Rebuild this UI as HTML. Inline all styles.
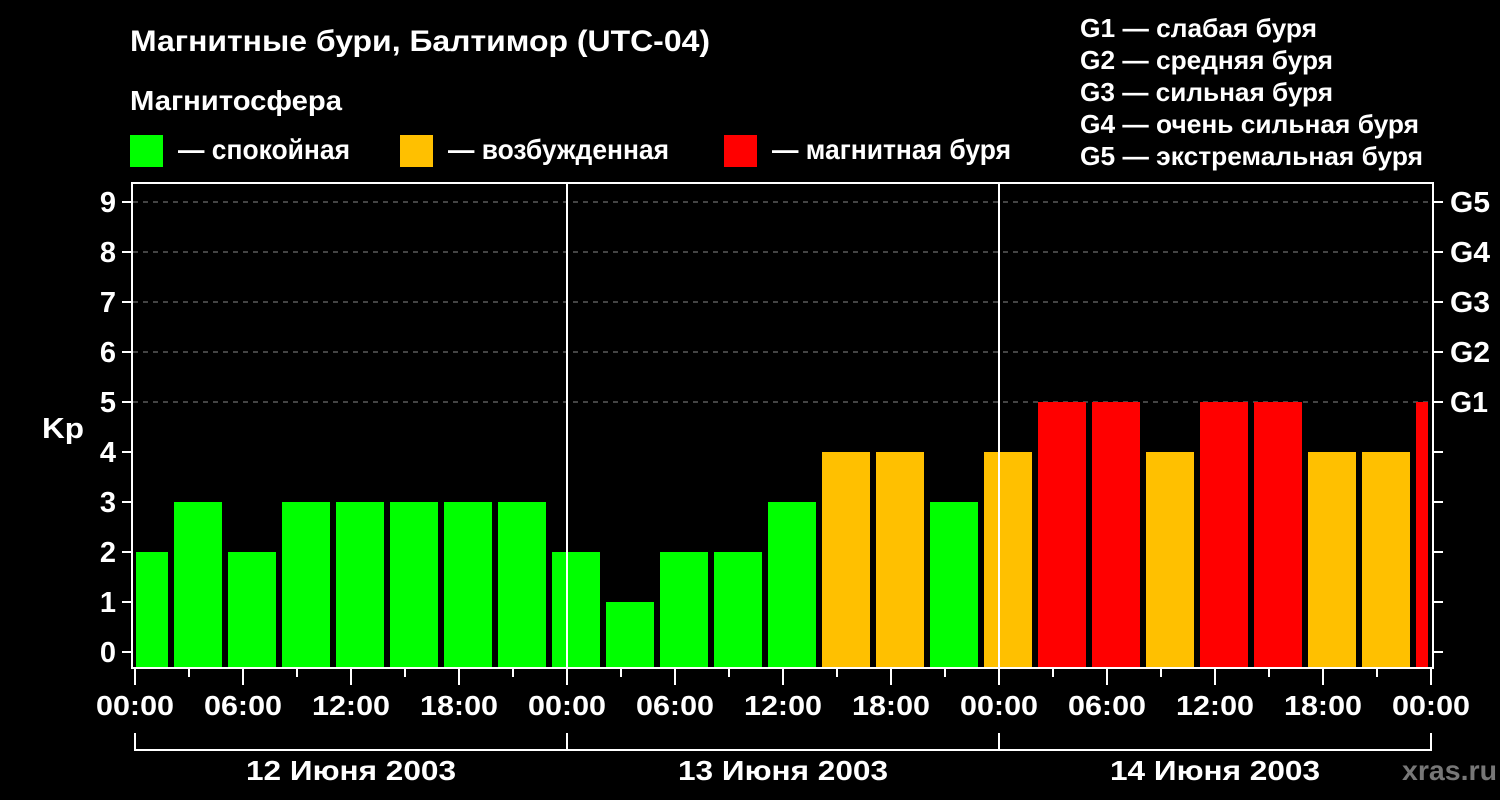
<!DOCTYPE html>
<html><head><meta charset="utf-8"><style>
html,body{margin:0;padding:0;background:#000;}
svg{display:block;}
text{font-family:"Liberation Sans",sans-serif;font-weight:bold;fill:#fff;}
</style></head><body>
<svg width="1500" height="800" viewBox="0 0 1500 800" xmlns="http://www.w3.org/2000/svg">
<rect width="1500" height="800" fill="#000"/>
<text x="130" y="51" font-size="30" textLength="580" lengthAdjust="spacingAndGlyphs">Магнитные бури, Балтимор (UTC-04)</text>
<text x="130" y="110" font-size="28" textLength="212" lengthAdjust="spacingAndGlyphs">Магнитосфера</text>
<rect x="130" y="135" width="33" height="32" fill="#00ff00"/>
<text x="178" y="159" font-size="28" textLength="172" lengthAdjust="spacingAndGlyphs">— спокойная</text>
<rect x="400" y="135" width="33" height="32" fill="#ffc000"/>
<text x="448" y="159" font-size="28" textLength="221" lengthAdjust="spacingAndGlyphs">— возбужденная</text>
<rect x="724" y="135" width="33" height="32" fill="#ff0000"/>
<text x="772" y="159" font-size="28" textLength="239" lengthAdjust="spacingAndGlyphs">— магнитная буря</text>
<g font-size="26">
<text x="1080" y="37" textLength="237" lengthAdjust="spacingAndGlyphs">G1 — слабая буря</text>
<text x="1080" y="69" textLength="253" lengthAdjust="spacingAndGlyphs">G2 — средняя буря</text>
<text x="1080" y="101" textLength="253" lengthAdjust="spacingAndGlyphs">G3 — сильная буря</text>
<text x="1080" y="133" textLength="339" lengthAdjust="spacingAndGlyphs">G4 — очень сильная буря</text>
<text x="1080" y="165" textLength="343" lengthAdjust="spacingAndGlyphs">G5 — экстремальная буря</text>
</g>
<g stroke="#888" stroke-width="1" stroke-dasharray="5,5">
<line x1="133" y1="202" x2="1432" y2="202"/>
<line x1="133" y1="252" x2="1432" y2="252"/>
<line x1="133" y1="302" x2="1432" y2="302"/>
<line x1="133" y1="352" x2="1432" y2="352"/>
<line x1="133" y1="402" x2="1432" y2="402"/>
</g>
<g>
<rect x="136" y="552" width="32" height="116" fill="#00ff00"/>
<rect x="174" y="502" width="48" height="166" fill="#00ff00"/>
<rect x="228" y="552" width="48" height="116" fill="#00ff00"/>
<rect x="282" y="502" width="48" height="166" fill="#00ff00"/>
<rect x="336" y="502" width="48" height="166" fill="#00ff00"/>
<rect x="390" y="502" width="48" height="166" fill="#00ff00"/>
<rect x="444" y="502" width="48" height="166" fill="#00ff00"/>
<rect x="498" y="502" width="48" height="166" fill="#00ff00"/>
<rect x="552" y="552" width="48" height="116" fill="#00ff00"/>
<rect x="606" y="602" width="48" height="66" fill="#00ff00"/>
<rect x="660" y="552" width="48" height="116" fill="#00ff00"/>
<rect x="714" y="552" width="48" height="116" fill="#00ff00"/>
<rect x="768" y="502" width="48" height="166" fill="#00ff00"/>
<rect x="822" y="452" width="48" height="216" fill="#ffc000"/>
<rect x="876" y="452" width="48" height="216" fill="#ffc000"/>
<rect x="930" y="502" width="48" height="166" fill="#00ff00"/>
<rect x="984" y="452" width="48" height="216" fill="#ffc000"/>
<rect x="1038" y="402" width="48" height="266" fill="#ff0000"/>
<rect x="1092" y="402" width="48" height="266" fill="#ff0000"/>
<rect x="1146" y="452" width="48" height="216" fill="#ffc000"/>
<rect x="1200" y="402" width="48" height="266" fill="#ff0000"/>
<rect x="1254" y="402" width="48" height="266" fill="#ff0000"/>
<rect x="1308" y="452" width="48" height="216" fill="#ffc000"/>
<rect x="1362" y="452" width="48" height="216" fill="#ffc000"/>
<rect x="1416" y="402" width="12" height="266" fill="#ff0000"/>
</g>
<g stroke="#fff" stroke-width="2" fill="none">
<path d="M132 668 V183 H1433 V668 Z"/>
<line x1="567" y1="183" x2="567" y2="668"/>
<line x1="999" y1="183" x2="999" y2="668"/>
<path d="M122 202H132M122 252H132M122 302H132M122 352H132M122 402H132M122 452H132M122 502H132M122 552H132M122 602H132M122 652H132"/>
<path d="M1433 202H1443M1433 252H1443M1433 302H1443M1433 352H1443M1433 402H1443M1433 452H1443M1433 502H1443M1433 552H1443M1433 602H1443M1433 652H1443"/>
<path d="M135 668V685M189 668V677M243 668V685M297 668V677M351 668V685M405 668V677M459 668V685M513 668V677M567 668V685M621 668V677M675 668V685M729 668V677M783 668V685M837 668V677M891 668V685M945 668V677M999 668V685M1053 668V677M1107 668V685M1161 668V677M1215 668V685M1269 668V677M1323 668V685M1377 668V677M1431 668V685"/>
<path d="M135 733V750H1431V733M567 733V750M999 733V750"/>
</g>
<g font-size="29" text-anchor="end">
<text x="116" y="212">9</text><text x="116" y="262">8</text><text x="116" y="312">7</text><text x="116" y="362">6</text><text x="116" y="412">5</text><text x="116" y="462">4</text><text x="116" y="512">3</text><text x="116" y="562">2</text><text x="116" y="612">1</text><text x="116" y="662">0</text>
</g>
<text x="42" y="438" font-size="29" textLength="42" lengthAdjust="spacingAndGlyphs">Kp</text>
<g font-size="29">
<text x="1450" y="212" textLength="40" lengthAdjust="spacingAndGlyphs">G5</text><text x="1450" y="262" textLength="40" lengthAdjust="spacingAndGlyphs">G4</text><text x="1450" y="312" textLength="40" lengthAdjust="spacingAndGlyphs">G3</text><text x="1450" y="362" textLength="40" lengthAdjust="spacingAndGlyphs">G2</text><text x="1450" y="412" textLength="38" lengthAdjust="spacingAndGlyphs">G1</text>
</g>
<g font-size="28">
<text x="96" y="715" textLength="78" lengthAdjust="spacingAndGlyphs">00:00</text>
<text x="204" y="715" textLength="78" lengthAdjust="spacingAndGlyphs">06:00</text>
<text x="312" y="715" textLength="78" lengthAdjust="spacingAndGlyphs">12:00</text>
<text x="420" y="715" textLength="78" lengthAdjust="spacingAndGlyphs">18:00</text>
<text x="528" y="715" textLength="78" lengthAdjust="spacingAndGlyphs">00:00</text>
<text x="636" y="715" textLength="78" lengthAdjust="spacingAndGlyphs">06:00</text>
<text x="744" y="715" textLength="78" lengthAdjust="spacingAndGlyphs">12:00</text>
<text x="852" y="715" textLength="78" lengthAdjust="spacingAndGlyphs">18:00</text>
<text x="960" y="715" textLength="78" lengthAdjust="spacingAndGlyphs">00:00</text>
<text x="1068" y="715" textLength="78" lengthAdjust="spacingAndGlyphs">06:00</text>
<text x="1176" y="715" textLength="78" lengthAdjust="spacingAndGlyphs">12:00</text>
<text x="1284" y="715" textLength="78" lengthAdjust="spacingAndGlyphs">18:00</text>
<text x="1392" y="715" textLength="78" lengthAdjust="spacingAndGlyphs">00:00</text>
<text x="246" y="780" textLength="210" lengthAdjust="spacingAndGlyphs">12 Июня 2003</text>
<text x="678" y="780" textLength="210" lengthAdjust="spacingAndGlyphs">13 Июня 2003</text>
<text x="1110" y="780" textLength="210" lengthAdjust="spacingAndGlyphs">14 Июня 2003</text>
</g>
<text x="1402" y="780" font-size="28" textLength="95" lengthAdjust="spacingAndGlyphs" style="fill:#777">xras.ru</text>
</svg>
</body></html>
